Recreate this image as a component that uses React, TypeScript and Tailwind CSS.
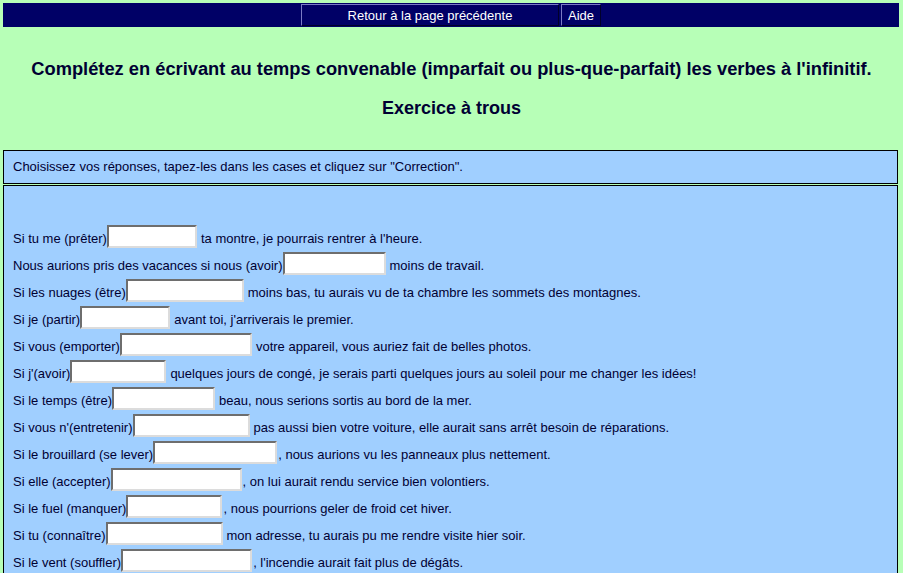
const rows: { before: string; width: number; after: string }[] = [
  { before: 'Si tu me (prêter)', width: 90, after: 'ta montre, je pourrais rentrer à l\'heure.' },
  { before: 'Nous aurions pris des vacances si nous (avoir)', width: 103, after: 'moins de travail.' },
  { before: 'Si les nuages (être)', width: 118, after: 'moins bas, tu aurais vu de ta chambre les sommets des montagnes.' },
  { before: 'Si je (partir)', width: 90, after: 'avant toi, j\'arriverais le premier.' },
  { before: 'Si vous (emporter)', width: 132, after: 'votre appareil, vous auriez fait de belles photos.' },
  { before: 'Si j\'(avoir)', width: 96, after: 'quelques jours de congé, je serais parti quelques jours au soleil pour me changer les idées!' },
  { before: 'Si le temps (être)', width: 103, after: 'beau, nous serions sortis au bord de la mer.' },
  { before: 'Si vous n\'(entretenir)', width: 117, after: 'pas aussi bien votre voiture, elle aurait sans arrêt besoin de réparations.' },
  { before: 'Si le brouillard (se lever)', width: 124, after: ', nous aurions vu les panneaux plus nettement.' },
  { before: 'Si elle (accepter)', width: 131, after: ', on lui aurait rendu service bien volontiers.' },
  { before: 'Si le fuel (manquer)', width: 96, after: ', nous pourrions geler de froid cet hiver.' },
  { before: 'Si tu (connaître)', width: 117, after: 'mon adresse, tu aurais pu me rendre visite hier soir.' },
  { before: 'Si le vent (souffler)', width: 131, after: ', l\'incendie aurait fait plus de dégâts.' },
]

function GapInput({ width }: { width: number }) {
  return (
    <input
      type="text"
      style={{ width }}
      className="h-[23px] bg-white border-2 border-t-[#6e6e6e] border-l-[#6e6e6e] border-b-[#dcdcdc] border-r-[#dcdcdc] outline-none px-1 text-[13px]"
    />
  )
}

export default function App() {
  return (
    <div className="min-h-screen bg-[#b7ffb7] pt-[3px] pb-2 text-[#000033] font-['Liberation_Sans',Arial,sans-serif]">
      {/* top navigation */}
      <div className="ml-[3px] mr-[4px] h-[24px] bg-[#000066] flex justify-center items-stretch gap-[2px] py-px">
        <a className="w-[258px] flex items-center justify-center border border-t-[#7a7ac4] border-l-[#7a7ac4] border-b-[#00002a] border-r-[#00002a] text-white text-[13px] leading-none">
          Retour à la page précédente
        </a>
        <a className="w-[40px] flex items-center justify-center border border-t-[#7a7ac4] border-l-[#7a7ac4] border-b-[#00002a] border-r-[#00002a] text-white text-[13px] leading-none">
          Aide
        </a>
      </div>

      <h1 className="mt-[31px] text-center text-[18.3px] leading-[21px] font-bold">
        Complétez en écrivant au temps convenable (imparfait ou plus-que-parfait) les verbes à l'infinitif.
      </h1>
      <h2 className="mt-[19px] text-center text-[18px] leading-[21px] font-bold">Exercice à trous</h2>

      <div className="mt-[31px] ml-[3px] mr-[5px] h-[34px] border border-black bg-[#a0cfff] flex items-center pl-[9px] text-[13px]">
        Choisissez vos réponses, tapez-les dans les cases et cliquez sur "Correction".
      </div>

      <div className="mt-px ml-[3px] mr-[5px] border border-black bg-[#a0cfff] pl-[9px] pt-[37px] pb-8 text-[13px]">
        {rows.map((r) => (
          <div key={r.before} className="h-[27px] flex items-center">
            <span className="pt-[4px]">{r.before}</span>
            <GapInput width={r.width} />
            <span className={r.after.startsWith(',') ? 'pt-[4px] ml-px' : 'pt-[4px] ml-[4px]'}>{r.after}</span>
          </div>
        ))}
      </div>
    </div>
  )
}
